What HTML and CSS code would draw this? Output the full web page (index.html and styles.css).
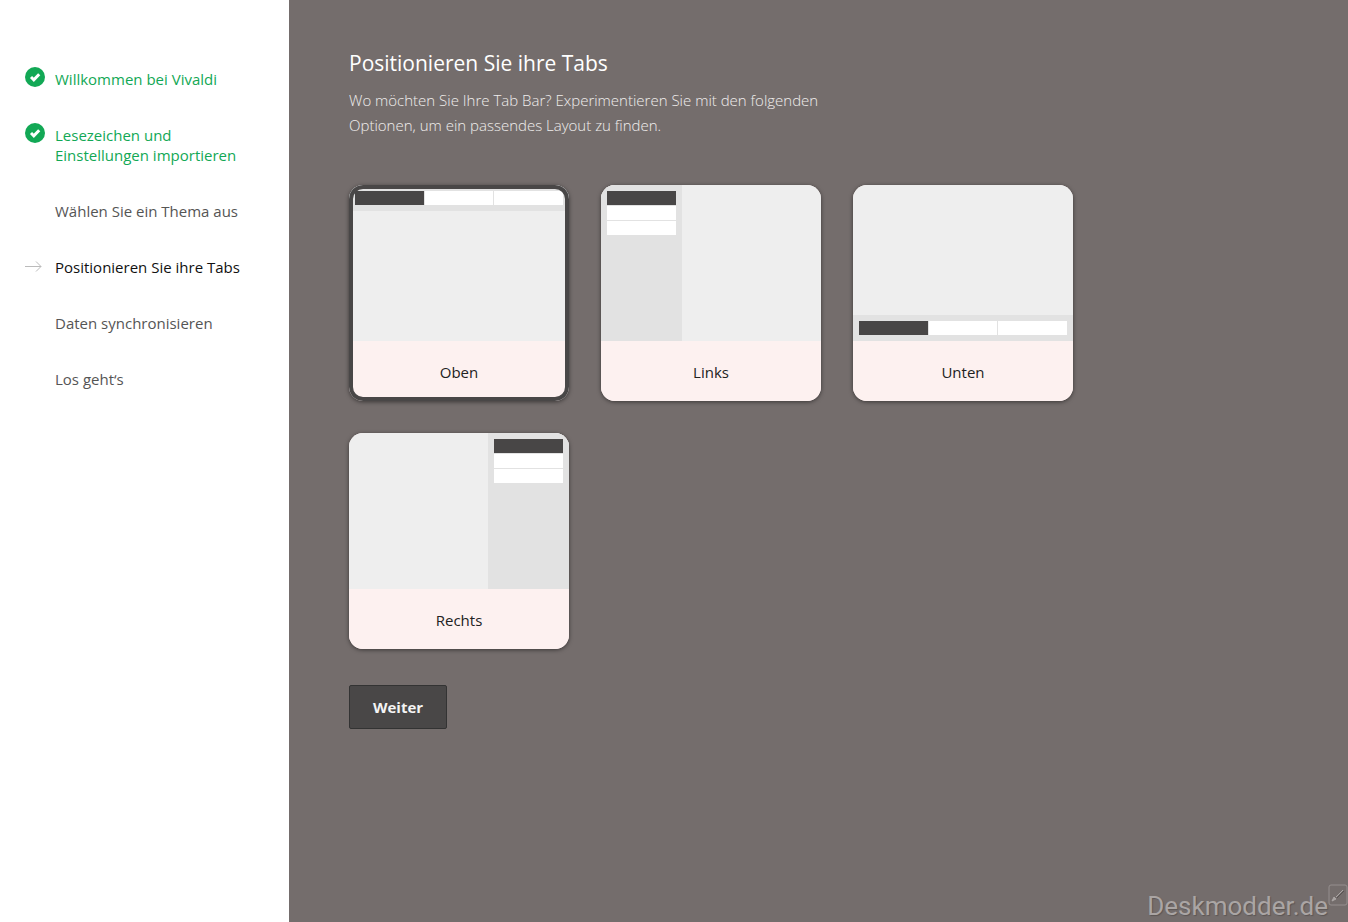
FILE: index.html
```html
<!DOCTYPE html>
<html lang="de">
    <head>
        <meta charset="utf-8">
        <title>Positionieren Sie ihre Tabs</title>
        <link rel="stylesheet" href="styles.css">
    </head>
    <body>
        <nav class="sidebar">
            <ol class="steps">
                <li class="step done">
                    <svg class="icon" viewBox="0 0 20 20">
                        <circle cx="10" cy="10" r="10" fill="#12a855"/>
                        <path d="M6 10l2.8 2.8 5.4-5.6" fill="none" stroke="#fff" stroke-width="3"/>
                    </svg>
                    <span>Willkommen bei Vivaldi</span>
                </li>
                <li class="step done">
                    <svg class="icon" viewBox="0 0 20 20">
                        <circle cx="10" cy="10" r="10" fill="#12a855"/>
                        <path d="M6 10l2.8 2.8 5.4-5.6" fill="none" stroke="#fff" stroke-width="3"/>
                    </svg>
                    <span>Lesezeichen und<br>Einstellungen importieren</span>
                </li>
                <li class="step">
                    <span class="icon"></span>
                    <span>Wählen Sie ein Thema aus</span>
                </li>
                <li class="step current">
                    <svg class="icon" viewBox="0 0 20 20">
                        <path d="M0 11.5h16M11 6.5l5 5-5 5" fill="none" stroke="#bbb"/>
                    </svg>
                    <span>Positionieren Sie ihre Tabs</span>
                </li>
                <li class="step">
                    <span class="icon"></span>
                    <span>Daten synchronisieren</span>
                </li>
                <li class="step">
                    <span class="icon"></span>
                    <span>Los geht‘s</span>
                </li>
            </ol>
        </nav>
        <main class="content">
            <h1>Positionieren Sie ihre Tabs</h1>
            <p class="intro">Wo möchten Sie Ihre Tab Bar? Experimentieren Sie mit den folgenden Optionen, um ein passendes Layout zu finden.</p>
            <form>
                <div class="cards">
                    <label class="card">
                        <input type="radio" name="position" value="top" checked>
                        <span class="preview top"><span class="tabbar"><i></i><i></i><i></i></span></span>
                        <span class="name">Oben</span>
                    </label>
                    <label class="card">
                        <input type="radio" name="position" value="left">
                        <span class="preview left"><span class="tabbar"><i></i><i></i><i></i></span></span>
                        <span class="name">Links</span>
                    </label>
                    <label class="card">
                        <input type="radio" name="position" value="bottom">
                        <span class="preview bottom"><span class="tabbar"><i></i><i></i><i></i></span></span>
                        <span class="name">Unten</span>
                    </label>
                    <label class="card">
                        <input type="radio" name="position" value="right">
                        <span class="preview right"><span class="tabbar"><i></i><i></i><i></i></span></span>
                        <span class="name">Rechts</span>
                    </label>
                </div>
                <button type="button" class="next">Weiter</button>
            </form>
        </main>
        <div class="watermark">
            <span>Deskmodder.de</span>
            <svg class="pen" viewBox="0 0 20 22">
                <rect x="1" y="1" width="18" height="20" rx="2" fill="none" stroke="#958f8e"/>
                <path d="M4 17l2-4 2 2zM8 13l7-7" fill="#aaa5a4" stroke="#aaa5a4"/>
                <path d="M9 14l7-7" stroke="#565150"/>
            </svg>
        </div>
    </body>
</html>
```
FILE: styles.css
```css
* {
    box-sizing: border-box;
}

body {
    display: flex;
    min-height: 100vh;
    margin: 0;
    font: 15px/20px "Open Sans", "Noto Sans", sans-serif;
    background: #746d6c;
}

.sidebar {
    flex: none;
    width: 289px;
    padding: 67px 25px;
    background: #fff;
}

.steps {
    display: flex;
    flex-direction: column;
    gap: 34px;
    margin: 0;
    padding: 0;
    list-style: none;
}

.step {
    display: flex;
    gap: 10px;
    color: #555;
    white-space: nowrap;
}

.step span {
    padding-top: 2px;
}

.step.done { color: #12a855; }
.step.current { color: #111; }

.icon {
    flex: none;
    width: 20px;
    height: 20px;
}

.content {
    flex: 1;
    padding: 48px 60px;
}

h1 {
    margin: 0 0 10px;
    font-size: 21px;
    font-weight: 400;
    line-height: 30px;
    color: #fff;
}

.intro {
    max-width: 480px;
    margin: 0 0 47px;
    font-weight: 300;
    line-height: 25px;
    color: #f0eeed;
}

.cards {
    display: flex;
    flex-wrap: wrap;
    gap: 32px;
    margin-bottom: 36px;
}

.card {
    position: relative;
    width: 220px;
    overflow: hidden;
    border-radius: 14px;
    background: #fdf1f0;
    box-shadow: 0 1px 4px rgba(0, 0, 0, .5);
    cursor: pointer;
}

/* the radio lies over the whole card and draws the selection frame */
.card input {
    position: absolute;
    inset: 0;
    margin: 0;
    appearance: none;
    border-radius: 14px;
    cursor: pointer;
}

.card input:checked {
    border: 4px solid #494747;
    box-shadow: 0 0 0 4px #494747;
}

.card:has(input:checked) {
    background: #494747;
}

.preview {
    display: flex;
    height: 156px;
    background: #eee;
}

.tabbar {
    display: flex;
    gap: 1px;
    padding: 6px;
    background: #e2e2e2;
}

.tabbar i {
    height: 14px;
    background: #fff;
}

.tabbar i:first-child {
    background: #484646;
}

.top, .bottom { flex-direction: column; }
.bottom, .right { justify-content: flex-end; }

.top .tabbar i,
.bottom .tabbar i {
    flex: 1;
}

.left .tabbar,
.right .tabbar {
    flex-direction: column;
    width: 81px;
}

.name {
    display: block;
    padding: 21px 0 19px;
    background: #fdf1f0;
    text-align: center;
    color: #222;
}

.next {
    height: 44px;
    padding: 0 23px;
    border: 1px solid #333;
    border-radius: 2px;
    background: #494747;
    color: #f4f4f4;
    font: bold 15px/20px "Open Sans", "Noto Sans", sans-serif;
    cursor: pointer;
}

.watermark {
    position: absolute;
    right: 0;
    bottom: 0;
    display: flex;
    align-items: flex-end;
    font: 26px/32px Roboto, "Liberation Sans", sans-serif;
    color: #aaa5a4;
    text-shadow: 1px 1px 1px #5c5655;
}

.pen {
    width: 20px;
    height: 22px;
    margin-bottom: 16px;
}
```
